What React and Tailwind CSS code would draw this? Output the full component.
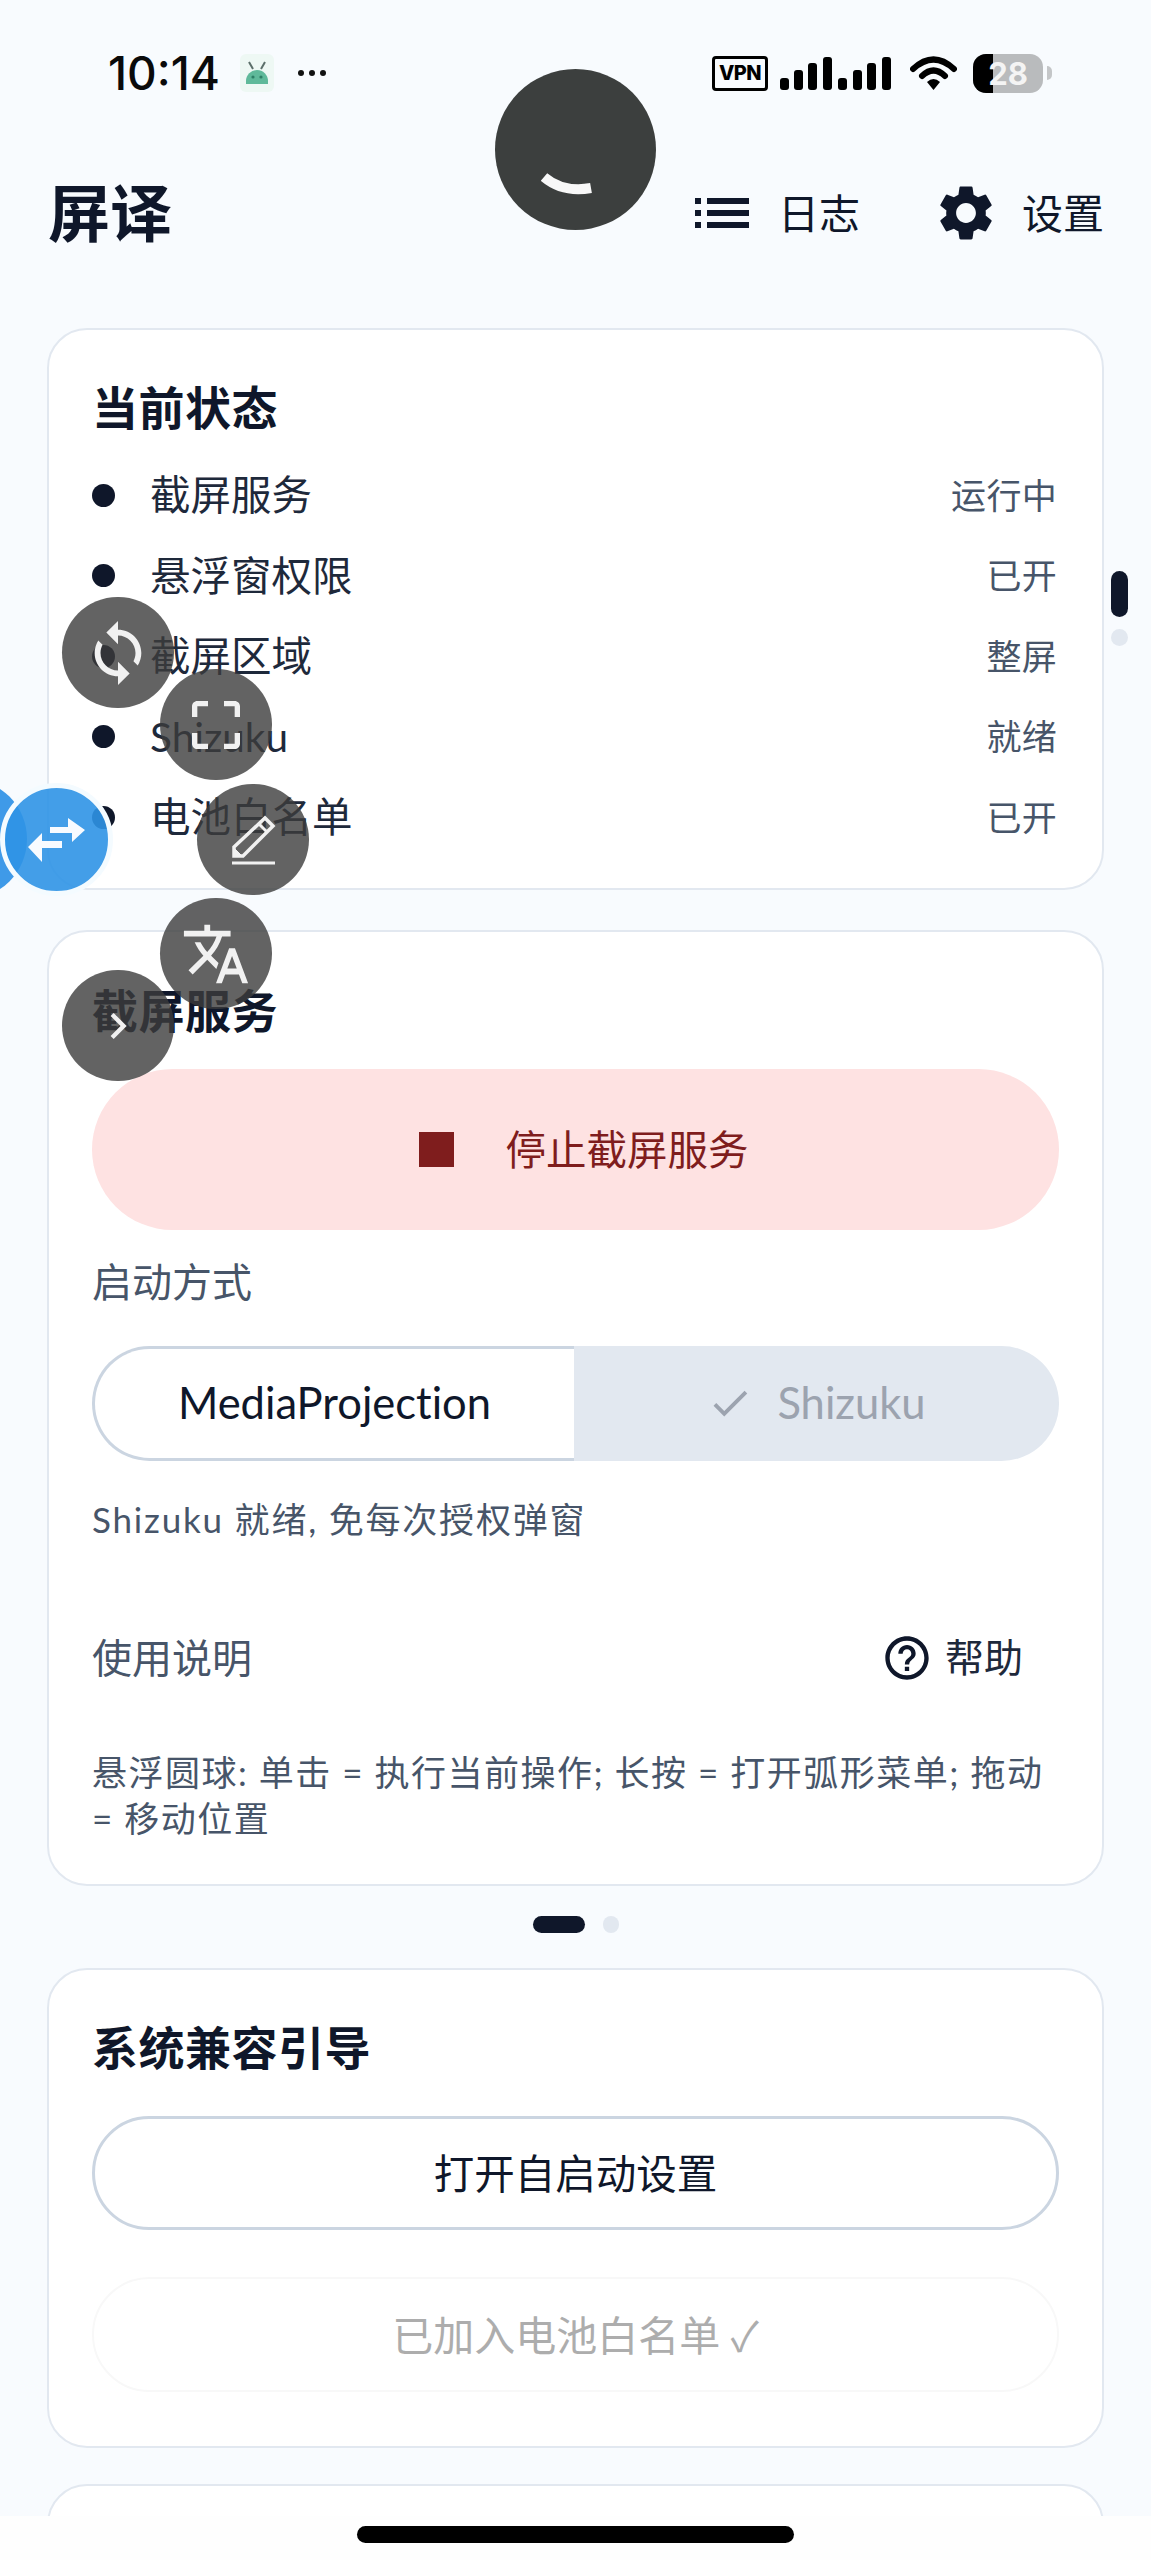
import React from "react";
import {
  MdList,
  MdSettings,
  MdCheck,
  MdHelpOutline,
  MdSync,
  MdCropFree,
  MdTranslate,
  MdChevronRight,
} from "react-icons/md";

const statusRows = [
  { name: "截屏服务", value: "运行中" },
  { name: "悬浮窗权限", value: "已开" },
  { name: "截屏区域", value: "整屏" },
  { name: "Shizuku", value: "就绪" },
  { name: "电池白名单", value: "已开" },
];

const StatusBar = () => {
  return (
    <div className="h-[146px] flex items-center justify-between pl-[108px] pr-[99px]">
      <div className="flex items-center">
        <span className="text-[46px] leading-none font-medium text-[#0a0a0a] font-['Inter'] tracking-[0px]">
          10:14
        </span>
        <div className="ml-[20px] w-[34px] h-[38px] rounded-[6px] bg-[#eef8f4] flex items-center justify-center">
          <svg width="30" height="28" viewBox="0 0 30 28">
            <path d="M4 25 V22 a11 11 0 0 1 22 0 V25 z" fill="#5fb99a" />
            <path d="M7 3l4 7M23 3l-4 7" stroke="#5c6f6a" strokeWidth="2" />
            <circle cx="11" cy="18" r="1.6" fill="#2d7f66" />
            <circle cx="19" cy="18" r="1.6" fill="#2d7f66" />
          </svg>
        </div>
        <div className="ml-[24px] flex gap-[5px]">
          <span className="w-[6px] h-[6px] rounded-full bg-[#111]"></span>
          <span className="w-[6px] h-[6px] rounded-full bg-[#111]"></span>
          <span className="w-[6px] h-[6px] rounded-full bg-[#111]"></span>
        </div>
      </div>
      <div className="flex items-center">
        <div className="w-[56px] h-[35px] border-[3px] border-black rounded-[4px] flex items-center justify-center text-[20px] leading-none font-extrabold text-black font-['Inter'] tracking-[-0.5px]">
          VPN
        </div>
        <svg className="ml-[12px]" width="111" height="35" viewBox="0 0 111 35">
          <rect x="0" y="22" width="9" height="12" rx="3" />
          <rect x="14" y="14" width="9" height="20" rx="3" />
          <rect x="28" y="7" width="9" height="27" rx="3" />
          <rect x="43" y="1" width="9" height="33" rx="3" />
          <rect x="58" y="22" width="9" height="12" rx="3" />
          <rect x="73" y="14" width="9" height="20" rx="3" />
          <rect x="87" y="7" width="9" height="27" rx="3" />
          <rect x="102" y="1" width="9" height="33" rx="3" />
        </svg>
        <svg className="ml-[19px]" width="47" height="34" viewBox="0 0 47 34">
          <path d="M3 13 Q23.5 -6 44 13" fill="none" stroke="#000" strokeWidth="6" strokeLinecap="round" />
          <path d="M12 20 Q23.5 9 35 20" fill="none" stroke="#000" strokeWidth="6" strokeLinecap="round" />
          <path d="M17 26 Q23.5 20 30 26 L23.5 34z" fill="#000" />
        </svg>
        <div className="ml-[16px] relative w-[70px] h-[39px] rounded-[13px] bg-[#b9bbbd] overflow-hidden flex items-center justify-center">
          <div className="absolute left-0 top-0 bottom-0 w-[20px] bg-black"></div>
          <span className="relative text-[31px] leading-none font-bold text-[#f4f4f4] font-['Inter']">28</span>
        </div>
        <div className="ml-[4px] w-[5px] h-[14px] rounded-r-full bg-[#c4c6c8]"></div>
      </div>
    </div>
  );
};

const Header = () => {
  return (
    <div className="h-[134px] flex items-center justify-between pl-[48px] pr-[47px]">
      <h1 className="text-[62px] leading-none font-bold text-[#0f172a]">屏译</h1>
      <div className="flex items-center">
        <MdList className="text-[#0f172a] w-[72px] h-[72px]" />
        <span className="ml-[20px] text-[41px] leading-none text-[#0f172a]">日志</span>
        <MdSettings className="ml-[73px] text-[#0f172a] w-[66px] h-[66px]" />
        <span className="ml-[23px] text-[41px] leading-none text-[#0f172a]">设置</span>
      </div>
    </div>
  );
};

const CurrentStatus = () => {
  return (
    <div className="mx-[47px] mt-[48px] rounded-[40px] border-2 border-[#e2e8f0] bg-white px-[43px] pt-[48px] pb-[30px]">
      <h2 className="text-[46px] leading-[60px] font-bold text-[#0f172a] tracking-[0.5px] mb-[17px]">当前状态</h2>
      {statusRows.map((row) => (
        <div key={row.name} className="h-[80.5px] flex items-center">
          <span className="w-[23px] h-[23px] rounded-full bg-[#0f172a]"></span>
          <span className="ml-[35px] text-[40.5px] leading-none text-[#1e293b]">{row.name}</span>
          <span className="ml-auto mr-[2px] text-[35px] leading-none text-[#475569] tracking-[0.3px]">{row.value}</span>
        </div>
      ))}
    </div>
  );
};

const CaptureService = () => {
  return (
    <div className="mx-[47px] mt-[40px] rounded-[40px] border-2 border-[#e2e8f0] bg-white px-[43px] pt-[49px] pb-[43px]">
      <h2 className="text-[46px] leading-[60px] font-bold text-[#0f172a] tracking-[0.5px]">截屏服务</h2>
      <button className="mt-[28px] w-full h-[161px] rounded-full bg-[#fee2e2] flex items-center justify-center pl-[16px] text-[#7f1d1d]">
        <span className="w-[35px] h-[35px] bg-[#7f1d1d]"></span>
        <span className="ml-[52px] pt-[2px] text-[40.5px] leading-none">停止截屏服务</span>
      </button>
      <div className="mt-[27px] text-[40px] leading-[50px] text-[#475569]">启动方式</div>
      <div className="mt-[39px] h-[115px] grid grid-cols-[482px_1fr]">
        <div className="rounded-l-full border-[3px] border-r-0 border-[#cbd5e1] bg-white flex items-center justify-center text-[43.5px] leading-none text-[#0f172a] [font-variant-ligatures:none]">
          MediaProjection
        </div>
        <div className="rounded-r-full bg-[#e2e8f0] flex items-center justify-center text-[43.5px] leading-none text-[#9ca3af]">
          <MdCheck className="w-[46px] h-[46px]" />
          <span className="ml-[24px]">Shizuku</span>
        </div>
      </div>
      <div className="mt-[33px] text-[35px] leading-[50px] text-[#475569] tracking-[1.8px]">Shizuku 就绪, 免每次授权弹窗</div>
      <div className="mt-[74px] h-[80px] flex items-center justify-between">
        <span className="text-[40px] leading-none text-[#475569]">使用说明</span>
        <div className="flex items-center mr-[36px] text-[#1e293b]">
          <MdHelpOutline className="w-[52px] h-[52px] text-[#0f172a]" />
          <span className="ml-[12px] text-[39px] leading-none">帮助</span>
        </div>
      </div>
      <p className="mt-[51px] text-[35px] leading-[46px] text-[#475569] tracking-[1.5px]">
        悬浮圆球: 单击 = 执行当前操作; 长按 = 打开弧形菜单; 拖动 = 移动位置
      </p>
    </div>
  );
};

const Pager = () => {
  return (
    <div className="h-[82px] flex items-center justify-center gap-[18px] pb-[4px]">
      <span className="w-[52px] h-[17px] rounded-full bg-[#0f172a]"></span>
      <span className="w-[16px] h-[17px] rounded-full bg-[#e2e8f0]"></span>
    </div>
  );
};

const CompatGuide = () => {
  return (
    <div className="mx-[47px] rounded-[40px] border-2 border-[#e2e8f0] bg-white px-[43px] pt-[48px] pb-[54px]">
      <h2 className="text-[46px] leading-[60px] font-bold text-[#0f172a] tracking-[0.5px]">系统兼容引导</h2>
      <button className="mt-[38px] w-full h-[114px] rounded-full border-[3px] border-[#cbd5e1] flex items-center justify-center pt-[3px] text-[40.5px] leading-none text-[#0f172a]">
        打开自启动设置
      </button>
      <button className="mt-[47px] w-full h-[115px] rounded-full border-2 border-[#f8f8f8] flex items-center justify-center pt-[3px] text-[41px] leading-none text-[#adadad]">
        已加入电池白名单 ✓
      </button>
    </div>
  );
};

const MenuBubble = ({ className, children }) => {
  return (
    <div className={`absolute w-[112px] h-[111px] rounded-full bg-[#3c3c3c]/80 flex items-center justify-center text-[#f1f1f1] ${className}`}>
      {children}
    </div>
  );
};

const FloatingMenu = () => {
  return (
    <>
      <MenuBubble className="left-[62px] top-[597px]">
        <MdSync className="w-[70px] h-[70px]" />
      </MenuBubble>
      <MenuBubble className="left-[160px] top-[669px]">
        <MdCropFree className="w-[64px] h-[64px]" />
      </MenuBubble>
      <MenuBubble className="left-[197px] top-[784px]">
        <svg width="60" height="60" viewBox="0 0 60 60" fill="none" stroke="#f1f1f1">
          <path d="M11 46 L11 37 L42 8 L50 16 L20 46 Z" strokeWidth="3.5" />
          <path d="M11 46 L11 38 L19 46 Z" fill="#f1f1f1" strokeWidth="1" />
          <path d="M36 14 L44 22" strokeWidth="3" />
          <path d="M9 53 H52" strokeWidth="3" />
        </svg>
      </MenuBubble>
      <MenuBubble className="left-[160px] top-[898px]">
        <MdTranslate className="w-[70px] h-[70px]" />
      </MenuBubble>
      <MenuBubble className="left-[62px] top-[970px]">
        <MdChevronRight className="w-[52px] h-[52px]" />
      </MenuBubble>
      <div className="absolute left-[-93px] top-[779px] w-[120px] h-[120px] rounded-full bg-[#3f9ae8]"></div>
      <div className="absolute left-0 top-[783px] w-[113px] h-[113px] rounded-full border-[5px] border-[#f4fbff] bg-[#2f93e6]/90 flex items-center justify-center">
        <svg width="58" height="46" viewBox="0 0 58 46" fill="#f8fbff">
          <path d="M22 10 H40 V1 L57 13 L44 25 V16 H22 Z" />
          <path d="M34 24 H14 V16 L0 30 L14 45 V31 H34 Z" />
        </svg>
      </div>
    </>
  );
};

const App = () => {
  return (
    <div className="relative w-[1151px] h-[2560px] overflow-hidden bg-[#f8fbfe] font-['Lato','Noto_Sans_CJK_SC',sans-serif]">
      <StatusBar />
      <Header />
      <CurrentStatus />
      <CaptureService />
      <Pager />
      <CompatGuide />
      <div className="mx-[47px] mt-[36px] h-[200px] rounded-[40px] border-2 border-[#e2e8f0] bg-white"></div>

      {/* camera bubble */}
      <div className="absolute left-[495px] top-[69px] w-[161px] h-[161px] rounded-full bg-[#3c3f3e]">
        <svg className="absolute left-[46px] top-[104px]" width="56" height="26" viewBox="0 0 56 26">
          <path d="M3 4 Q22 20 50 15" fill="none" stroke="#f8f8f8" strokeWidth="10" />
        </svg>
      </div>

      {/* side page indicator */}
      <div className="absolute left-[1111px] top-[571px] w-[17px] h-[46px] rounded-full bg-[#0f172a]"></div>
      <div className="absolute left-[1111px] top-[629px] w-[17px] h-[17px] rounded-full bg-[#e2e8f0]"></div>

      <FloatingMenu />

      {/* gesture bar */}
      <div className="absolute left-0 right-0 bottom-0 h-[44px] bg-[#fefefe]">
        <div className="absolute left-[357px] top-[10px] w-[437px] h-[17px] rounded-full bg-black"></div>
      </div>
    </div>
  );
};

export default App;
